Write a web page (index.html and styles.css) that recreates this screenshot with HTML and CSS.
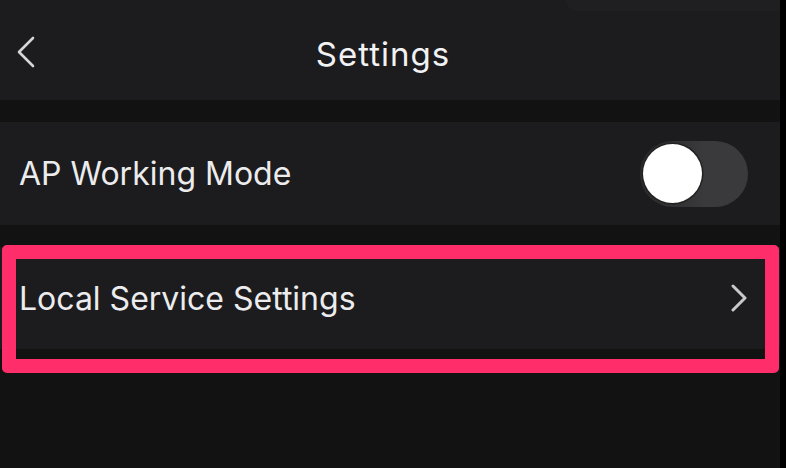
FILE: index.html
```html
<!DOCTYPE html>
<html>
<head>
<meta charset="utf-8">
<link rel="stylesheet" href="styles.css">
</head>
<body>
<div class="device">
  <div class="screen">
    <div class="top-sheet"></div>
    <header class="navbar">
      <button class="back" aria-label="Back">
        <svg width="20" height="32" viewBox="0 0 20 32"><polyline points="17,2 3,16 17,30" fill="none" stroke="#d6d6d6" stroke-width="2.6" stroke-linecap="round" stroke-linejoin="round"/></svg>
      </button>
      <h1 class="title">Settings</h1>
      <span class="spacer"></span>
    </header>
    <div class="list">
      <div class="row">
        <span class="label">AP Working Mode</span>
        <span class="toggle"><span class="knob"></span></span>
      </div>
      <div class="row row-link">
        <span class="label">Local Service Settings</span>
        <svg class="chev" width="18" height="28" viewBox="0 0 18 28"><polyline points="3,2 15,14 3,26" fill="none" stroke="#c9c9cc" stroke-width="3" stroke-linecap="round" stroke-linejoin="round"/></svg>
        <span class="highlight"></span>
      </div>
    </div>
  </div>
  <div class="edge"></div>
</div>
</body>
</html>
```

FILE: styles.css
```css
html, body {
  margin: 0;
  padding: 0;
  background: #121213;
  font-family: Inter, Roboto, "Liberation Sans", sans-serif;
}
.device {
  display: flex;
  width: 786px;
  height: 468px;
  overflow: hidden;
}
.screen {
  position: relative;
  width: 780px;
  background: #121213;
}
.edge {
  width: 6px;
  background: #000;
}
.top-sheet {
  position: absolute;
  top: 0;
  left: 566px;
  right: 0;
  height: 11px;
  background: #1f1f21;
  border-bottom-left-radius: 18px;
}
.navbar {
  height: 92px;
  padding-top: 8px;
  background: #1c1c1e;
  display: flex;
  align-items: center;
  padding-left: 16px;
  padding-right: 16px;
}
.back {
  width: 40px;
  background: none;
  border: 0;
  padding: 0;
  display: flex;
  align-items: center;
  margin-top: -4px;
}
.title {
  flex: 1;
  margin: 0;
  text-align: center;
  color: #f2f2f4;
  font-weight: 400;
  font-size: 33px;
  letter-spacing: 1px;
}
.spacer { width: 54px; }
.list {
  display: flex;
  flex-direction: column;
  gap: 22px;
  padding-top: 22px;
}
.row {
  position: relative;
  height: 103px;
  background: #1c1c1e;
  display: flex;
  align-items: center;
  justify-content: space-between;
  padding-left: 19px;
  padding-right: 32px;
}
.row-link { height: 102px; padding-right: 32px; }
.label {
  color: #ececee;
  font-size: 32px;
  font-weight: 400;
}
.toggle {
  width: 108px;
  height: 66px;
  border-radius: 33px;
  background: linear-gradient(90deg, #2c2c2e 0%, #333336 40%, #3a3a3d 60%);
  display: flex;
  align-items: center;
  padding-left: 3px;
  box-sizing: border-box;
}
.knob {
  width: 59px;
  height: 59px;
  border-radius: 50%;
  background: #fff;
  box-shadow: 0 0 0 1.5px #222;
}
.highlight {
  position: absolute;
  left: 2px;
  right: 1px;
  top: -2px;
  bottom: -24px;
  border: 14px solid #ff2e6a;
  border-radius: 5px;
}
```
